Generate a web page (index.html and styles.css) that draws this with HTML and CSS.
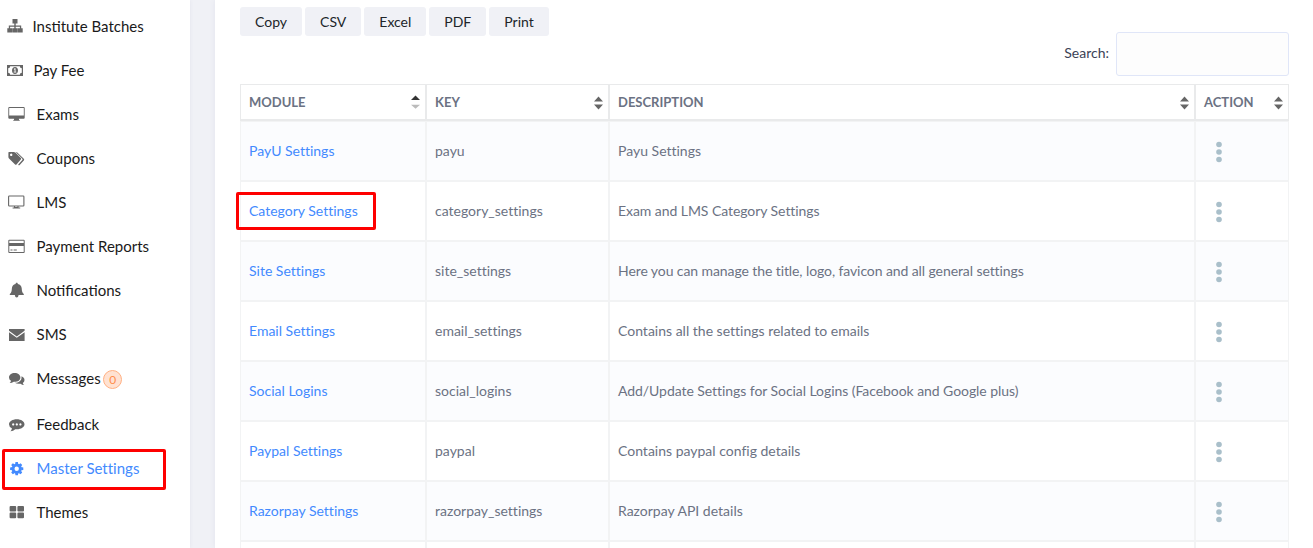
FILE: index.html
```html
<!DOCTYPE html>
<html lang="en">
<head>
<meta charset="utf-8">
<title>Master Settings</title>
<link rel="stylesheet" href="styles.css">
</head>
<body>
<div class="layout">
  <nav class="sidebar">
    <a class="item item-first"><svg class="icon" viewBox="0 -1 16 16"><path d="M5.5 0h5v4.500H8.700v2H14.200v2.700h1.500v4.300h-5v-4.300h2.200V7.800H8.700v1.400h1.800v4.300h-5v-4.300h1.800V7.800H3.100v1.400h2.200v4.300h-5v-4.300h1.500V6.500h5.500v-2H5.500z"/></svg><span>Institute Batches</span></a>
    <a class="item item-second"><svg class="icon" viewBox="0 -.5 16 16"><path fill-rule="evenodd" d="M0 2.500h16v11H0zM3.200 3.700A2.200 2.200 0 0 1 1.200 5.800v4.400a2.200 2.200 0 0 1 2 2.100h9.600a2.200 2.200 0 0 1 2-2.100V5.800a2.200 2.200 0 0 1-2-2.100z"/><path fill-rule="evenodd" d="M8 4.500c1.800 0 3 1.500 3 3.500s-1.200 3.500-3 3.500S5 10 5 8s1.200-3.500 3-3.500zM6.700 6.600l.5.700.4-.3v2.300h-.9v.8h2.600v-.8h-.8V5.800h-.8z"/></svg><span>Pay Fee</span></a>
    <a class="item"><svg class="icon" viewBox="0 0 17 16"><path fill-rule="evenodd" d="M1.300 1h14.400q1 0 1 1v9.700q0 1-1 1h-4.900l.3 1.300h.6v.8H5.300V14h.6l.3-1.300H1.300q-1 0-1-1V2q0-1 1-1zM1.200 1.900v7.500h14.600V1.900z"/></svg><span>Exams</span></a>
    <a class="item"><svg class="icon" viewBox="0 -.7 17 16"><path fill-rule="evenodd" d="M1 1.200h4.800q.8 0 1.500.6l5.500 5.500q.700.700 0 1.500l-4.300 4.900q-.700.600-1.400 0L1 7.700q-.6-.6-.6-1.300V1.900q0-.700.6-.700zM3.200 2.900a1.200 1.200 0 1 0 .01 0z"/><path d="M7.500 1.200q1 0 1.800.700l6.500 6.200q.900.900 0 1.800L11.700 14.200q-.8.700-1.600-.2l4.200-4.600q.6-.700 0-1.300z"/></svg><span>Coupons</span></a>
    <a class="item"><svg class="icon" viewBox="0 0 17 16"><path fill="none" stroke="currentColor" stroke-width="1.100" d="M1.300 2h13.900q.7 0 .7.700v8.600q0 .700-.700.700H1.300q-.700 0-.700-.700V2.700q0-.700.700-.700zM6.500 12.200v1.300h3.500v-1.300M4.600 14h7.600"/></svg><span>LMS</span></a>
    <a class="item"><svg class="icon" viewBox="0 -.3 17 16"><path fill-rule="evenodd" d="M1.300 1.500h14.400q1 0 1 1v11.200q0 1-1 1H1.300q-1 0-1-1V2.500q0-1 1-1zM1.300 2.400v2.200h14.400V2.400zM1.300 7.800v5.900h14.400V7.800zM2.500 11.300h2v1h-2zM5.600 11.300h3.200v1H5.600z"/></svg><span>Payment Reports</span></a>
    <a class="item"><svg class="icon" viewBox="0 0 17 16"><path d="M8.700.7c.8 0 1.100.5 1.100 1.200 2.400.5 3.700 2.200 3.900 4.400.2 3 .5 4.600 2.100 5.600v1h-5.200q-.3 2.600-1.900 2.600T6.800 12.900H1.800v-1C3.400 10.900 3.700 9.300 3.900 6.300c.2-2.200 1.300-3.900 3.700-4.400C7.600 1.200 7.900.7 8.700.7z"/></svg><span>Notifications</span></a>
    <a class="item"><svg class="icon" viewBox="0 -.6 17 16"><path d="M1 2.400h15.600v1.800L8.800 9.800 1 4.200zM1 5.600l7.800 5.600 7.800-5.600v8.900H1z"/></svg><span>SMS</span></a>
    <a class="item"><svg class="icon" viewBox="0 -1 17 16"><path d="M6.700 2c3.300 0 5.700 1.900 5.700 4.400s-2.400 4.400-5.700 4.400l-1-.1q-1.800 1.400-4 1.300 1.100-.8 1.300-2.200-2-1.300-2-3.400C1 3.900 3.400 2 6.700 2z"/><path d="M13.500 5.300c1.800.7 3 2 3 3.600q0 1.800-1.700 3 .2 1.300 1.400 2-2 .1-3.700-1.200-3.400.6-5.700-1c4 .1 6.700-2 6.700-5z"/></svg><span>Messages</span><span class="badge">0</span></a>
    <a class="item item-feedback"><svg class="icon" viewBox="0 -1.300 17 16"><path fill-rule="evenodd" d="M8.800 2c4.300 0 7.700 2.200 7.700 5s-3.400 5-7.700 5l-1.500-.1q-2.300 2.100-4.800 2 1.200-1 1.400-2.900Q1 9.800 1 7C1 4.200 4.500 2 8.800 2zM5.200 6a1.100 1.100 0 1 0 .01 0zM8.800 6a1.100 1.100 0 1 0 .01 0zM12.400 6a1.100 1.100 0 1 0 .01 0z"/></svg><span>Feedback</span></a>
    <a class="item active"><svg class="icon" viewBox="0 0 17 16"><g transform="translate(8.700 8.700)"><path fill-rule="evenodd" d="M-5 0a5 5 0 1 0 10 0a5 5 0 1 0-10 0zM-2.200 0a2.200 2.200 0 1 1 4.400 0a2.200 2.200 0 1 1-4.400 0z"/><path id="tooth" d="M-1.600-4.400l.4-2.200h2.400l.4 2.200z"/><use href="#tooth" transform="rotate(45)"/><use href="#tooth" transform="rotate(90)"/><use href="#tooth" transform="rotate(135)"/><use href="#tooth" transform="rotate(180)"/><use href="#tooth" transform="rotate(225)"/><use href="#tooth" transform="rotate(270)"/><use href="#tooth" transform="rotate(315)"/></g></svg><span>Master Settings</span></a>
    <a class="item"><svg class="icon" viewBox="0 0 17 16"><path d="M2.600 2H7.200q1 0 1 1v3.600q0 1-1 1H2.600q-1 0-1-1V3q0-1 1-1zM10.400 2h4.600q1 0 1 1v3.600q0 1-1 1h-4.600q-1 0-1-1V3q0-1 1-1zM2.600 8.600H7.200q1 0 1 1v3.600q0 1-1 1H2.600q-1 0-1-1V9.600q0-1 1-1zM10.400 8.600h4.600q1 0 1 1v3.600q0 1-1 1h-4.600q-1 0-1-1V9.600q0-1 1-1z"/></svg><span>Themes</span></a>
  </nav>
  <main class="panel">
    <div class="buttons"><button>Copy</button><button>CSV</button><button>Excel</button><button>PDF</button><button>Print</button></div>
    <div class="search"><label for="q">Search:</label><input id="q" type="text"></div>
    <table class="grid">
      <colgroup><col class="c-module"><col class="c-key"><col class="c-desc"><col class="c-action"></colgroup>
      <thead><tr>
        <th><div class="head">MODULE<svg class="sort asc" viewBox="0 0 9 14"><path d="M0 5l4.500-4.500L9 5z"/><path class="down" d="M0 9.700h9l-4.500 4z"/></svg></div></th>
        <th><div class="head">KEY<svg class="sort" viewBox="0 0 9 14"><path d="M0 5.500L4.500.500 9 5.500zM0 8.500h9l-4.500 5z"/></svg></div></th>
        <th><div class="head">DESCRIPTION<svg class="sort" viewBox="0 0 9 14"><path d="M0 5.500L4.500.500 9 5.500zM0 8.500h9l-4.500 5z"/></svg></div></th>
        <th><div class="head">ACTION<svg class="sort" viewBox="0 0 9 14"><path d="M0 5.500L4.500.500 9 5.500zM0 8.500h9l-4.500 5z"/></svg></div></th>
      </tr></thead>
      <tbody>
        <tr><td><a>PayU Settings</a></td><td>payu</td><td>Payu Settings</td><td><svg class="dots" viewBox="0 0 6 22"><circle cx="3" cy="3.500" r="2.800"/><circle cx="3" cy="11" r="2.800"/><circle cx="3" cy="18.500" r="2.800"/></svg></td></tr>
        <tr><td class="marked"><a>Category Settings</a></td><td>category_settings</td><td class="snug">Exam and LMS Category Settings</td><td><svg class="dots" viewBox="0 0 6 22"><circle cx="3" cy="3.500" r="2.800"/><circle cx="3" cy="11" r="2.800"/><circle cx="3" cy="18.500" r="2.800"/></svg></td></tr>
        <tr><td><a>Site Settings</a></td><td>site_settings</td><td class="tight">Here you can manage the title, logo, favicon and all general settings</td><td><svg class="dots" viewBox="0 0 6 22"><circle cx="3" cy="3.500" r="2.800"/><circle cx="3" cy="11" r="2.800"/><circle cx="3" cy="18.500" r="2.800"/></svg></td></tr>
        <tr><td><a>Email Settings</a></td><td>email_settings</td><td>Contains all the settings related to emails</td><td><svg class="dots" viewBox="0 0 6 22"><circle cx="3" cy="3.500" r="2.800"/><circle cx="3" cy="11" r="2.800"/><circle cx="3" cy="18.500" r="2.800"/></svg></td></tr>
        <tr><td><a>Social Logins</a></td><td>social_logins</td><td class="snug">Add/Update Settings for Social Logins (Facebook and Google plus)</td><td><svg class="dots" viewBox="0 0 6 22"><circle cx="3" cy="3.500" r="2.800"/><circle cx="3" cy="11" r="2.800"/><circle cx="3" cy="18.500" r="2.800"/></svg></td></tr>
        <tr><td><a>Paypal Settings</a></td><td>paypal</td><td>Contains paypal config details</td><td><svg class="dots" viewBox="0 0 6 22"><circle cx="3" cy="3.500" r="2.800"/><circle cx="3" cy="11" r="2.800"/><circle cx="3" cy="18.500" r="2.800"/></svg></td></tr>
        <tr><td><a>Razorpay Settings</a></td><td>razorpay_settings</td><td>Razorpay API details</td><td><svg class="dots" viewBox="0 0 6 22"><circle cx="3" cy="3.500" r="2.800"/><circle cx="3" cy="11" r="2.800"/><circle cx="3" cy="18.500" r="2.800"/></svg></td></tr>
        <tr><td></td><td></td><td></td><td></td></tr>
      </tbody>
    </table>
  </main>
</div>
</body>
</html>
```

FILE: styles.css
```css
*, *::after { box-sizing: border-box; }
body { margin: 0; background: #f0f1f6; font-family: Lato, "Liberation Sans", sans-serif; font-size: 14px; color: #6b7283; overflow: hidden; }
.layout { display: flex; height: 548px; overflow: hidden; }
.sidebar { width: 190px; flex: none; padding-top: 4px; background: #fff; box-shadow: 0 0 4px rgba(80, 80, 130, .08); }
.item { display: flex; align-items: center; height: 44px; padding-left: 8px; color: #1a1a1a; font-size: 15px; white-space: nowrap; }
.icon { width: 17px; height: 16px; margin-right: 11.5px; flex: none; fill: currentColor; color: #666; }
.item-first { padding-left: 7px; }
.item-first .icon { width: 16px; margin-right: 9.5px; }
.item-second { padding-left: 7px; }
.item-second .icon { width: 16px; margin-right: 10.5px; }
.item-feedback { margin-top: 2px; }
.badge { display: flex; align-items: center; justify-content: center; width: 19px; height: 19px; margin: 2px 0 0 2.5px; border: 1px solid #ffb083; border-radius: 50%; background: #ffe2d2; color: #ff8e4c; font-size: 12px; }
.active, .active .icon { color: #438afe; }
.active { position: relative; font-variant-ligatures: none; }
.active::after { content: ""; position: absolute; left: 2px; top: 3px; width: 164px; height: 41px; border: 3px solid #fe0000; border-radius: 2px; }
.panel { flex: 1; margin-left: 25px; padding: 7px 24px 0 25px; background: #fff; box-shadow: 0 0 6px rgba(80, 80, 130, .08); }
.buttons { display: flex; gap: 3px; height: 25px; }
.buttons button { height: 29px; padding: 0 15px; border: 0; border-radius: 3px; background: #f0f1f6; color: #212529; font: 14px Lato, sans-serif; }
.search { display: flex; justify-content: flex-end; align-items: center; gap: 7px; height: 44px; color: #3b4256; }
.search label { padding-bottom: 3px; }
.search input { width: 173px; height: 44px; border: 1px solid #e0e6f8; border-radius: 3px; background: #fdfdfd; }
.grid { width: 1049px; margin-top: 8px; table-layout: fixed; border-collapse: separate; border-spacing: 0; }
.c-module { width: 186px; }
.c-key { width: 183px; }
.c-desc { width: 586px; }
.c-action { width: 94px; }
.grid th { height: 37px; padding: 0 5px 0 8px; border: 1px solid #e9eaeb; border-bottom-width: 2px; text-align: left; font-weight: 700; font-size: 13px; }
.head { display: flex; align-items: center; justify-content: space-between; }
.sort { width: 9px; height: 14px; margin-top: 1px; fill: #666; }
.asc { margin-top: 0; fill: #333; }
.down { fill: #bbb; }
.grid td { height: 60px; padding: 0 8px 2px; border: 1px solid #f2f3f4; white-space: nowrap; font-variant-ligatures: none; }
.grid td.snug { letter-spacing: -.06px; }
.grid td.tight { letter-spacing: -.09px; }
.grid td a { color: #438afe; }
.grid tbody tr:nth-child(odd) td { background: #fbfcfe; }
.dots { display: block; width: 6px; height: 22px; margin: 3px 0 0 12px; fill: #a9bfca; }
.marked { position: relative; }
.marked::after { content: ""; position: absolute; left: -5px; top: 10px; width: 140px; height: 38px; border: 3px solid #fe0000; border-radius: 2px; }
```
